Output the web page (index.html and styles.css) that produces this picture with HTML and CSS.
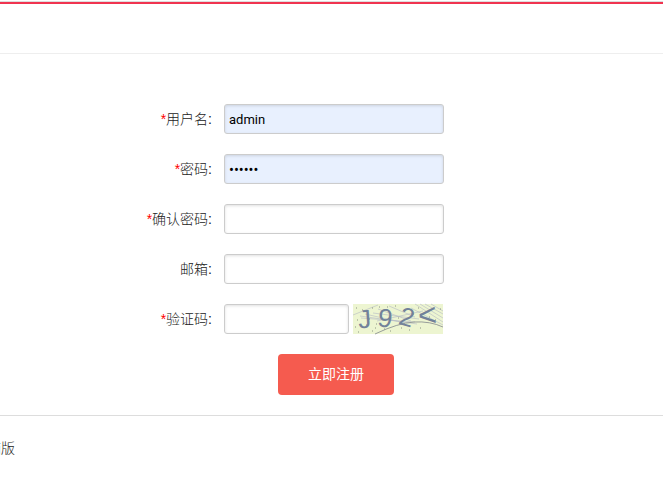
FILE: index.html
```html
<!DOCTYPE html>
<html lang="zh-CN">
<head>
  <meta charset="UTF-8" />
  <meta name="viewport" content="width=device-width, initial-scale=1.0" />
  <title>用户注册</title>
  <link rel="stylesheet" href="styles.css">
</head>
<body>

  <header class="header"></header>

  <main>
    <form class="register">
      <div class="row">
        <label for="username"><span class="required">*</span>用户名:</label>
        <input type="text" id="username" class="filled" value="admin" />
      </div>
      <div class="row">
        <label for="password"><span class="required">*</span>密码:</label>
        <input type="password" id="password" class="filled" value="123456" />
      </div>
      <div class="row">
        <label for="confirm"><span class="required">*</span>确认密码:</label>
        <input type="password" id="confirm" />
      </div>
      <div class="row">
        <label for="email">邮箱:</label>
        <input type="text" id="email" />
      </div>
      <div class="row">
        <label for="captcha"><span class="required">*</span>验证码:</label>
        <div class="captcha">
          <input type="text" id="captcha" />
          <!-- 验证码图片 -->
          <svg width="90" height="30" viewBox="0 0 90 30">
            <rect width="90" height="30" fill="#edf5d1" />
            <g fill="none" stroke="#b3b8c4" stroke-width="0.6">
              <path d="M0 11 L25 1 M7 12 L64 20 M8 14 L62 18 M20 9 L66 15 M24 17 L70 7 M25 5 L58 17 M36 2 L62 13" />
              <path d="M62 0 L90 18 M67 0 L90 14 M72 0 L90 10 M78 0 L90 7 M58 4 L90 21 M12 10 L52 19" />
            </g>
            <path d="M22 30 Q45 19 61 18 T90 23" fill="none" stroke="#81868c" stroke-width="0.8" />
            <path d="M2 23h1M5 28h1M9 6h1M16 15h1M19 27h1M26 3h1M28 12h1M31 25h1M37 27h1M42 2h1M48 24h1M51 7h1M56 26h1M60 10h1M67 24h1M87 5h1M4 16h1M13 21h1M23 20h1M45 14h1M65 4h1M3 4h1M19 4h1M22 24h1M34 3h1M76 13h1M82 16h1" stroke="#8c9584" />
            <g class="code">
              <text x="5" y="24" transform="rotate(-4 11 14)">J</text>
              <text x="25" y="23" transform="rotate(8 32 14)">9</text>
              <text x="47" y="22" transform="rotate(16 54 12)">2</text>
              <text x="65" y="22" transform="rotate(-4 74 11)" class="wide">&lt;</text>
            </g>
          </svg>
        </div>
      </div>
      <button type="submit" class="submit">立即注册</button>
    </form>
  </main>

  <footer class="footer"><a href="#">电脑版</a></footer>

</body>
</html>
```

FILE: styles.css
```css
* {
  box-sizing: border-box;
}

body {
  margin: 0;
  padding-top: 1px;
  overflow-x: hidden;
  font-family: "Liberation Sans", "Noto Sans CJK SC", sans-serif;
  font-size: 14px;
  font-weight: 300;
  line-height: 20px;
  color: #222;
  background-color: #fff;
}

.header {
  height: 53px;
  border-top: 1px solid #ddd;
  border-bottom: 1px solid #eee;
}

.header::before {
  content: "";
  display: block;
  height: 2px;
  background-color: #f03350;
}

.register {
  padding: 50px 0 20px;
}

.row {
  display: flex;
  align-items: center;
  margin-bottom: 20px;
}

.row label {
  width: 212px;
  margin-right: 12px;
  text-align: right;
}

.required {
  color: #f00;
}

.row input {
  width: 220px;
  height: 30px;
  padding: 4px;
  border: 1px solid #ccc;
  border-radius: 3px;
  box-shadow: inset 0 1px 3px rgba(0,0,0,0.12);
  font-family: Roboto, sans-serif;
  font-size: 13px;
  color: #000;
  background-color: #fff;
}

.row input[type="password"] {
  font-family: "Noto Sans", sans-serif;
}

.row .filled {
  background-color: #e8f0fe;
}

.captcha {
  display: flex;
  align-items: center;
  gap: 4px;
}

.captcha svg {
  overflow: visible;
}

.row .captcha input {
  width: 125px;
}

.code {
  font-family: "Liberation Sans", sans-serif;
  font-size: 26px;
  font-weight: 400;
  fill: #72829a;
}

.code .wide {
  font-size: 32px;
}

.submit {
  display: block;
  height: 41px;
  margin-left: 278px;
  padding: 0 30px 4px;
  border: none;
  border-radius: 4px;
  font-family: inherit;
  font-size: 14px;
  color: #fff;
  background-color: #f55b4f;
  cursor: pointer;
}

.footer {
  padding: 22px 0;
  border-top: 1px solid #ddd;
}

/* 链接左侧超出屏幕 */
.footer a {
  margin-left: -27px;
  color: #222;
  text-decoration: none;
}
```
